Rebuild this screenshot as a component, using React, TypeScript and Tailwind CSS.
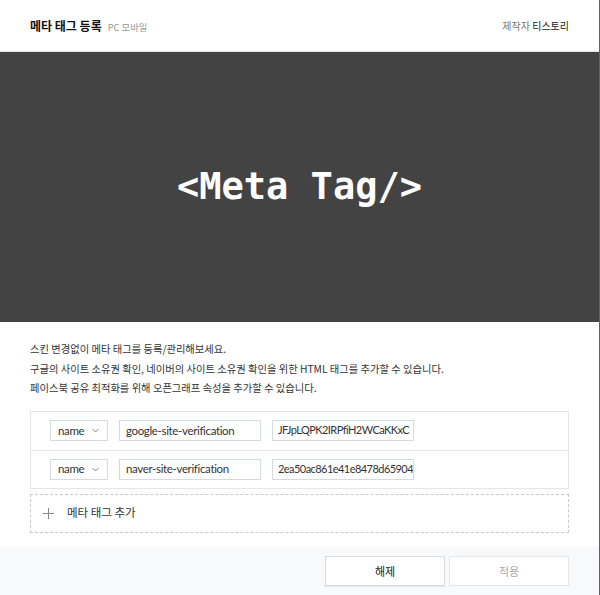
const font = { fontFamily: '"Noto Sans CJK KR", "Noto Sans", sans-serif' };
const latin = { fontFamily: 'Lato, "Noto Sans CJK KR", sans-serif' };

type MetaRow = { attr: string; key: string; value: string };

const rows: MetaRow[] = [
  { attr: "name", key: "google-site-verification", value: "JFJpLQPK2IRPfiH2WCaKKxC" },
  { attr: "name", key: "naver-site-verification", value: "2ea50ac861e41e8478d65904" },
];

function Chevron() {
  return (
    <svg width="7" height="5" viewBox="0 0 7 5" className="text-[#888]">
      <path d="M0.5 1l3 3 3-3" fill="none" stroke="currentColor" strokeWidth="1" />
    </svg>
  );
}

function Plus() {
  return (
    <svg width="11" height="11" viewBox="0 0 11 11" className="text-[#888]">
      <path d="M5.5 0v11M0 5.5h11" fill="none" stroke="currentColor" strokeWidth="1" />
    </svg>
  );
}

export default function App() {
  return (
    <div className="flex h-[595px] w-[600px] bg-white text-[#333]" style={font}>
      <div className="flex w-[599px] flex-col">
        <header className="flex h-[52px] shrink-0 items-center justify-between border-b border-[#e3e3e3] pr-[30px] pl-[30px]">
          <div className="flex items-baseline gap-[6px]">
            <h1 className="text-[12px] font-bold text-[#111]">메타 태그 등록</h1>
            <span className="text-[9.3px] text-[#999]">PC 모바일</span>
          </div>
          <div className="text-[10px]">
            <span className="text-[#777]">제작자 </span>
            <span className="text-[#222]">티스토리</span>
          </div>
        </header>

        <div className="flex h-[270px] shrink-0 items-center justify-center bg-[#434343]">
          <span className="font-['DejaVu_Sans_Mono',monospace] text-[37px] font-bold text-white">
            &lt;Meta Tag/&gt;
          </span>
        </div>

        <div className="flex-1 px-[30px] pt-[17px]">
          <div className="text-[10.3px] leading-[19.5px] text-[#333]">
            <p>스킨 변경없이 메타 태그를 등록/관리해보세요.</p>
            <p>구글의 사이트 소유권 확인, 네이버의 사이트 소유권 확인을 위한 HTML 태그를 추가할 수 있습니다.</p>
            <p>페이스북 공유 최적화를 위해 오픈그래프 속성을 추가할 수 있습니다.</p>
          </div>

          <div className="mt-[13px] border border-[#e4e6ea]">
            {rows.map((r, i) => (
              <div
                key={r.key}
                className={`flex h-[38px] items-center gap-[11px] px-[19px] ${i > 0 ? "border-t border-[#e4e6ea]" : ""}`}
                style={latin}
              >
                <div className="flex h-[21px] w-[58px] items-center justify-between border border-[#d5d9e0] pr-[8px] pl-[7px] text-[11.5px] tracking-[-0.03em] text-[#333]">
                  <span>{r.attr}</span>
                  <Chevron />
                </div>
                <div className="flex h-[21px] w-[142px] items-center overflow-hidden border border-[#d5d9e0] px-[6px] text-[11.5px] tracking-[-0.03em] whitespace-nowrap text-[#333]">
                  {r.key}
                </div>
                <div className="flex h-[21px] w-[142px] items-center overflow-hidden border border-[#d5d9e0] pr-[1px] pl-[5px] text-[11px] tracking-[-0.05em] whitespace-nowrap text-[#333]">
                  {r.value}
                </div>
              </div>
            ))}
          </div>

          <div className="mt-[5px] flex h-[39px] items-center gap-[13px] border border-dashed border-[#c9c9c9] px-[12px] text-[11.5px] text-[#333]">
            <Plus />
            <span>메타 태그 추가</span>
          </div>
        </div>

        <footer className="flex h-[48px] shrink-0 items-center justify-end gap-[4px] bg-[#f8f9fb] pr-[30px]">
          <button className="h-[30px] w-[120px] border border-[#d6d9de] bg-white text-[11px] text-[#222] shadow-[0_1px_1px_rgba(0,0,0,0.06)]">
            해제
          </button>
          <button className="h-[30px] w-[120px] border border-[#e4e6ea] bg-white text-[11px] text-[#aaa]">
            적용
          </button>
        </footer>
      </div>
      <div className="w-px bg-[#5f6368]" />
    </div>
  );
}
